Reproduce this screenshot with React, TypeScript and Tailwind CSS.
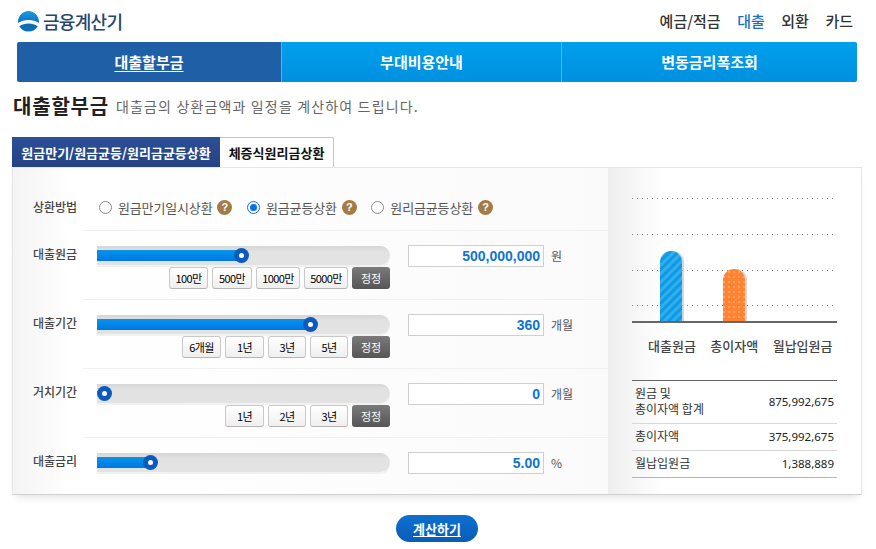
const KR = 'font-["Noto_Sans_CJK_KR",sans-serif]';

const sliders = [
  {
    label: '대출원금',
    fill: 'w-[144px]',
    knob: 'left-[137px]',
    value: '500,000,000',
    unit: '원',
    buttons: [
      { text: '100만', w: 'w-[39px]' },
      { text: '500만', w: 'w-[40px]' },
      { text: '1000만', w: 'w-[44px]' },
      { text: '5000만', w: 'w-[44px]' },
    ],
  },
  {
    label: '대출기간',
    fill: 'w-[213px]',
    knob: 'left-[206px]',
    value: '360',
    unit: '개월',
    buttons: [
      { text: '6개월', w: 'w-[39px]' },
      { text: '1년', w: 'w-[39px]' },
      { text: '3년', w: 'w-[38px]' },
      { text: '5년', w: 'w-[38px]' },
    ],
  },
  {
    label: '거치기간',
    fill: 'w-0',
    knob: 'left-0',
    value: '0',
    unit: '개월',
    buttons: [
      { text: '1년', w: 'w-[39px]' },
      { text: '2년', w: 'w-[38px]' },
      { text: '3년', w: 'w-[38px]' },
    ],
  },
  {
    label: '대출금리',
    fill: 'w-[53px]',
    knob: 'left-[46px]',
    value: '5.00',
    unit: '%',
    buttons: [],
  },
];

function Logo() {
  return (
    <svg width="23" height="22" viewBox="0 0 23 22">
      <defs>
        <linearGradient id="dome" x1="0" y1="0" x2="0" y2="1">
          <stop offset="0" stopColor="#1e9be0" />
          <stop offset="1" stopColor="#0b6fc2" />
        </linearGradient>
      </defs>
      <path d="M1 13C.6 6 5.500 1 11.500 1S22.400 6 22 13C19 11 15.500 10 11.500 10S4 11 1 13Z" fill="url(#dome)" />
      <path d="M2.300 16.200C5 14.300 8 13.500 11.500 13.500S18 14.300 20.700 16.200C18.800 19.600 15.500 21.500 11.500 21.500S4.200 19.600 2.300 16.200Z" fill="#0c6fb4" />
    </svg>
  );
}

function Help() {
  return (
    <span className="flex h-[15px] w-[15px] shrink-0 items-center justify-center rounded-full bg-[#a37b47] font-['Liberation_Sans',sans-serif] text-[11px] font-bold text-white">
      ?
    </span>
  );
}

function Radio({ label, checked }: { label: string; checked?: boolean }) {
  return (
    <div className="flex items-center">
      <span
        className={`flex h-[13px] w-[13px] shrink-0 items-center justify-center rounded-full border bg-white ${
          checked ? 'border-[#0f6fe0]' : 'border-[#8a8a8a]'
        }`}
      >
        {checked && <span className="h-[7px] w-[7px] rounded-full bg-[#0f6fe0]" />}
      </span>
      <span className="ml-[6px] mr-[5px] text-[13px] leading-none tracking-[-0.15px] text-[#555]">{label}</span>
      <Help />
    </div>
  );
}

function Slider({ fill, knob }: { fill: string; knob: string }) {
  return (
    <div className="relative h-[19px] w-[293px] rounded-r-full bg-gradient-to-b from-[#d6d6d6] via-[#e2e2e2] via-30% to-[#e3e3e3] shadow-[0_2px_0_#f1f1f1]">
      <div className={`absolute left-0 top-[4px] h-[11px] bg-gradient-to-b from-[#0a93e8] to-[#0078e6] ${fill}`} />
      <div className={`absolute top-[2px] flex h-[15px] w-[15px] items-center justify-center rounded-full bg-[#0a5bbd] ${knob}`}>
        <span className="h-[5px] w-[5px] rounded-full bg-white" />
      </div>
    </div>
  );
}

function SliderRow({ row, height }: { row: (typeof sliders)[number]; height: string }) {
  return (
    <div className={`flex pl-[20px] pt-[15px] ${height}`}>
      <div className="w-[64px] text-[12px] font-medium leading-[16px] text-[#444]">{row.label}</div>
      <div className="w-[293px]">
        <Slider fill={row.fill} knob={row.knob} />
        {row.buttons.length > 0 && (
          <div className="mt-[2px] flex justify-end gap-[4px]">
            {row.buttons.map((b) => (
              <button
                key={b.text}
                className={`h-[22px] rounded-[3px] border border-[#c9c9c9] border-b-[#b5b5b5] bg-gradient-to-b from-white to-[#efefef] text-[11px] leading-none tracking-[-0.6px] text-black ${b.w}`}
              >
                {b.text}
              </button>
            ))}
            <button className="h-[22px] w-[38px] rounded-[3px] bg-gradient-to-b from-[#7a7a7a] to-[#565656] text-[11px] leading-none text-white">
              정정
            </button>
          </div>
        )}
      </div>
      <div className="ml-[18px] flex h-[22px] w-[136px] -translate-y-px items-center justify-end border border-[#cfcfcf] bg-white pr-[3px] font-['Liberation_Sans',sans-serif] text-[14px] font-bold text-[#0f74d2]">
        {row.value}
      </div>
      <div className="ml-[7px] text-[12px] leading-[20px] text-[#555]">{row.unit}</div>
    </div>
  );
}

function Chart() {
  const lines = [8.5, 44.5, 80.5, 115.5];
  return (
    <svg width="205" height="134" viewBox="0 0 205 134" className="block">
      <defs>
        <pattern id="stripes" width="6" height="6" patternUnits="userSpaceOnUse" patternTransform="rotate(45)">
          <rect width="6" height="6" fill="#0b9ae8" />
          <rect width="3" height="6" fill="#35ade9" />
        </pattern>
        <pattern id="dots" width="5" height="5" patternUnits="userSpaceOnUse">
          <rect width="5" height="5" fill="#ff8331" />
          <rect x="1" y="1" width="2" height="2" fill="#ffa263" />
        </pattern>
      </defs>
      {lines.map((y) => (
        <line key={y} x1="0" x2="205" y1={y} y2={y} stroke="#888" strokeWidth="1" strokeDasharray="1 4" />
      ))}
      <path d="M30 132V72a11 11 0 0 1 22 0V132Z" fill="#bbb" opacity=".6" />
      <path d="M93 132V90a11 11 0 0 1 22 0V132Z" fill="#bbb" opacity=".6" />
      <path d="M28 132V72a11 11 0 0 1 22 0V132Z" fill="url(#stripes)" />
      <path d="M91 132V90a11 11 0 0 1 22 0V132Z" fill="url(#dots)" />
      <rect x="0" y="131" width="205" height="2" fill="#666" />
    </svg>
  );
}

const totals = [
  { label: ['원금 및', '총이자액 합계'], value: '875,992,675', h: 'h-[42px]' },
  { label: ['총이자액'], value: '375,992,675', h: 'h-[27px]' },
  { label: ['월납입원금'], value: '1,388,889', h: 'h-[27px]' },
];

export default function App() {
  return (
    <div className={`h-[549px] w-[876px] overflow-hidden bg-white ${KR}`}>
      <header className="flex h-[42px] items-center justify-between pl-[17px] pr-[23px]">
        <div className="flex items-center gap-[3px]">
          <Logo />
          <span className="text-[18px] font-medium tracking-[-0.7px] text-[#24466f]">금융계산기</span>
        </div>
        <nav className="flex gap-[16.500px] text-[15px] font-medium text-[#333]">
          <span>예금/적금</span>
          <span className="text-[#1a6fc4]">대출</span>
          <span>외환</span>
          <span>카드</span>
        </nav>
      </header>

      <div className="ml-[17px] flex h-[40px] w-[840px] overflow-hidden rounded-[2px] text-[15px] font-bold text-white">
        <div className="flex w-[264px] items-center justify-center bg-[#1f5fa6] underline underline-offset-[3px]">대출할부금</div>
        <div className="flex w-[280px] items-center justify-center border-l border-[#58b2ee] bg-gradient-to-b from-[#00a0ec] to-[#0090e0]">부대비용안내</div>
        <div className="flex flex-1 items-center justify-center border-l border-[#58b2ee] bg-gradient-to-b from-[#00a0ec] to-[#0090e0]">변동금리폭조회</div>
      </div>

      <div className="ml-[13px] mt-[9px] flex h-[30px] items-center">
        <h1 className="text-[20px] font-bold tracking-[0.8px] text-[#222]">대출할부금</h1>
        <p className="ml-[7px] text-[14px] tracking-[1.15px] text-[#666]">대출금의 상환금액과 일정을 계산하여 드립니다.</p>
      </div>

      <div className="ml-[12px] mt-[16px] flex h-[31px] text-[13px] font-bold">
        <div className="flex w-[208px] items-center justify-center bg-gradient-to-b from-[#2c4f97] to-[#254283] text-white">
          원금만기/원금균등/원리금균등상환
        </div>
        <div className="flex w-[114px] items-center justify-center rounded-tr-[2px] border-r border-t border-[#c4c4c4] bg-white text-[#111] shadow-[inset_0_-1px_0_#3a8fd0]">
          체증식원리금상환
        </div>
      </div>

      <section className="relative ml-[12px] flex h-[328px] w-[850px] -translate-y-px border border-[#e6e6e6] border-b-[#d0d0d0] shadow-[0_6px_8px_-4px_rgba(0,0,0,0.12)]">
        <div className="w-[595px] bg-gradient-to-r from-[#f4f4f4] via-white via-[10%] to-[#fafafa]">
          <div className="flex h-[62px] items-center pl-[20px] pt-[16px]">
            <div className="w-[66px] text-[12px] font-medium text-[#444]">상환방법</div>
            <div className="flex gap-[14.500px]">
              <Radio label="원금만기일시상환" />
              <Radio label="원금균등상환" checked />
              <Radio label="원리금균등상환" />
            </div>
          </div>
          {sliders.map((row, i) => (
            <div key={row.label}>
              <div className="ml-[70px] h-px bg-[#f0f0f0]" />
              <SliderRow row={row} height={i === 3 ? 'h-[56px]' : 'h-[68px]'} />
            </div>
          ))}
        </div>

        <aside className="flex-1 bg-gradient-to-r from-[#eeeeee] via-white via-[22%] to-white pl-[24px] pt-[22px]">
          <Chart />
          <div className="ml-[16px] mt-[13px] flex gap-[14.500px] text-[13px] font-medium leading-[18px] text-[#444]">
            <span>대출원금</span>
            <span>총이자액</span>
            <span>월납입원금</span>
          </div>
          <div className="mt-[25px] w-[205px] border-b border-t border-b-[#b5b5b5] border-t-[#666]">
            {totals.map((t, i) => (
              <div
                key={t.value}
                className={`flex items-center justify-between px-[3px] text-[12px] leading-[16px] text-[#333] ${t.h} ${
                  i > 0 ? 'border-t border-[#d8d8d8]' : ''
                }`}
              >
                <span className="-translate-y-px">
                  {t.label.map((l) => (
                    <span key={l} className="block">{l}</span>
                  ))}
                </span>
                <span className="font-['Noto_Sans',sans-serif] text-[11.500px] text-[#222]">{t.value}</span>
              </div>
            ))}
          </div>
        </aside>
      </section>

      <div className="mt-[19px] flex justify-center">
        <button className="h-[27px] w-[82px] -translate-x-[1px] rounded-full bg-gradient-to-b from-[#0e70cf] to-[#0a5cb8] text-[13px] font-bold text-white underline underline-offset-2">
          계산하기
        </button>
      </div>
    </div>
  );
}
